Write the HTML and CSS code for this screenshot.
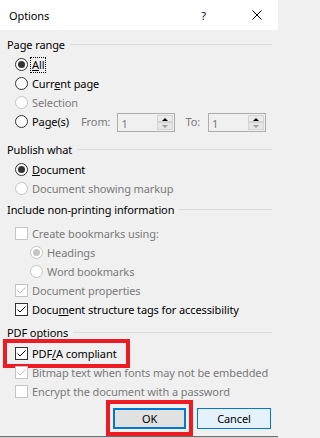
FILE: index.html
```html
<!DOCTYPE html>
<html>
<head>
<meta charset="utf-8">
<link rel="stylesheet" href="styles.css">
</head>
<body>
<div class="dialog">
  <div class="titlebar">
    <span class="title">Options</span>
    <span class="help">?</span>
    <svg class="close" width="10" height="10" viewBox="0 0 10 10"><path d="M0.5 0.5 L9.5 9.5 M9.5 0.5 L0.5 9.5" stroke="#000" stroke-width="1" fill="none"/></svg>
  </div>

  <div class="legend g1"><span>Page range</span><i class="sep"></i></div>
  <div class="row first1"><span class="radio on"></span><span class="focus"><u>A</u>ll</span></div>
  <div class="row"><span class="radio"></span><span>Curr<u>e</u>nt page</span></div>
  <div class="row dis"><span class="radio"></span><span>Selection</span></div>
  <div class="row"><span class="radio"></span><span class="pages">Pa<u>g</u>e(s)</span>
    <span class="lbl from">From:</span>
    <span class="spin"><span class="val">1</span><span class="arrows"><span class="up"></span><span class="down"></span></span></span>
    <span class="lbl to">To:</span>
    <span class="spin"><span class="val">1</span><span class="arrows"><span class="up"></span><span class="down"></span></span></span>
  </div>

  <div class="legend g2"><span>Publish what</span><i class="sep"></i></div>
  <div class="row first2"><span class="radio on"></span><span><u>D</u>ocument</span></div>
  <div class="row dis"><span class="radio"></span><span>Document showing markup</span></div>

  <div class="legend g3"><span>Include non-printing information</span><i class="sep"></i></div>
  <div class="row first3 dis"><span class="check"></span><span>Create bookmarks using:</span></div>
  <div class="row dis indent"><span class="radio on"></span><span>Headings</span></div>
  <div class="row dis indent"><span class="radio"></span><span>Word bookmarks</span></div>
  <div class="row dis"><span class="check on"><svg viewBox="0 0 11 11" width="11" height="11"><path d="M1.5 5.5 L4 8 L9.5 2.5" stroke="#bcbcbc" stroke-width="1" fill="none"/></svg></span><span>Document properties</span></div>
  <div class="row"><span class="check on"><svg viewBox="0 0 11 11" width="11" height="11"><path d="M1.5 5.5 L4 8 L9.5 2.5" stroke="#000" stroke-width="1" fill="none"/></svg></span><span>Docu<u>m</u>ent structure tags for accessibility</span></div>

  <div class="legend g4"><span>PDF options</span><i class="sep"></i></div>
  <div class="row first4">
    <span class="hl">
      <span class="check on"><svg viewBox="0 0 11 11" width="11" height="11"><path d="M1.5 5.5 L4 8 L9.5 2.5" stroke="#000" stroke-width="1" fill="none"/></svg></span><span>PDF<u>/</u>A compliant</span>
    </span>
  </div>
  <div class="row dis"><span class="check on"><svg viewBox="0 0 11 11" width="11" height="11"><path d="M1.5 5.5 L4 8 L9.5 2.5" stroke="#bcbcbc" stroke-width="1" fill="none"/></svg></span><span>Bitmap text when fonts may not be embedded</span></div>
  <div class="row dis"><span class="check"></span><span>Encrypt the document with a password</span></div>

  <div class="buttons">
    <span class="okwrap"><span class="btn ok">OK</span></span>
    <span class="btn cancel">Cancel</span>
  </div>
</div>
<div class="below"></div>
</body>
</html>
```

FILE: styles.css
```css
html, body {
  margin: 0;
  padding: 0;
}
body {
  width: 278px;
  height: 438px;
  overflow: hidden;
  background: #f0f0f0;
  font-family: "Noto Sans", "Open Sans", sans-serif;
  font-size: 11px;
  letter-spacing: -0.1px;
  color: #000;
}
.dialog {
  height: 437px;
  border-bottom: 1px solid #6e6e6e;
  box-sizing: border-box;
  overflow: hidden;
}
.titlebar {
  height: 30px;
  background: #fff;
  display: flex;
  align-items: center;
  padding-left: 9px;
}
.title {
  flex: 1;
}
.help {
  margin-right: 46px;
}
.close {
  margin-right: 16px;
}
.legend {
  height: 16px;
  display: flex;
  align-items: center;
  padding-left: 7px;
  padding-right: 6px;
}
.legend .sep {
  flex: 1;
  height: 1px;
  background: #dcdcdc;
  margin-left: 5px;
}
.g1 { margin-top: 6px; }
.g2 { margin-top: 10px; }
.g3 { margin-top: 3px; }
.g4 { margin-top: 5px; }
.first1 { margin-top: 3px; }
.first2 { margin-top: 3px; }
.first3 { margin-top: 7px; }
.first4 { margin-top: 4px; }
.row {
  height: 19px;
  display: flex;
  align-items: center;
  padding-left: 15px;
  white-space: nowrap;
}
.row.indent {
  padding-left: 30px;
}
.row.dis {
  color: #7a7a7a;
}
.radio {
  width: 13px;
  height: 13px;
  box-sizing: border-box;
  border: 1px solid #333;
  border-radius: 50%;
  background: #fff;
  margin-right: 4px;
  display: flex;
  align-items: center;
  justify-content: center;
  flex: none;
}
.radio.on::after {
  content: "";
  width: 7px;
  height: 7px;
  border-radius: 50%;
  background: #333;
}
.dis .radio {
  border-color: #c4c4c4;
}
.dis .radio.on::after {
  background: #c4c4c4;
}
.check {
  width: 13px;
  height: 13px;
  box-sizing: border-box;
  border: 1px solid #333;
  background: #fff;
  margin-right: 4px;
  display: flex;
  align-items: center;
  justify-content: center;
  flex: none;
}
.dis .check {
  border-color: #c4c4c4;
}
.focus {
  outline: 1px dotted #000;
  outline-offset: 0;
  padding: 0 1px;
  margin-left: -1px;
  line-height: 14px;
}
.lbl {
  color: #7a7a7a;
}
.from { margin-left: 12px; margin-right: 7px; }
.to { margin-left: 10px; margin-right: 8px; }
.spin {
  width: 58px;
  height: 19px;
  box-sizing: border-box;
  border: 1px solid #adadad;
  background: #f0f0f0;
  display: flex;
  margin-top: 1px;
}
.spin .val {
  flex: 1;
  color: #7a7a7a;
  padding-left: 3px;
  line-height: 20px;
}
.arrows {
  width: 16px;
  display: flex;
  flex-direction: column;
  margin: 1px 1px 1px 0;
}
.arrows .up, .arrows .down {
  flex: 1;
  background: #e6e6e6;
  border: 1px solid #d4d4d4;
  position: relative;
}
.arrows .up {
  background: #ececec;
}
.arrows .up::after, .arrows .down::after {
  content: "";
  position: absolute;
  left: 4px;
  width: 0;
  height: 0;
  border-left: 3px solid transparent;
  border-right: 3px solid transparent;
}
.arrows .up::after {
  top: 2px;
  border-bottom: 3px solid #000;
}
.arrows .down::after {
  top: 2px;
  border-top: 3px solid #9a9a9a;
}
.hl {
  display: flex;
  align-items: center;
  margin-left: -12px;
  padding: 0 9px 0 8px;
  height: 21px;
  border: 4px solid #ed1c24;
}
.buttons {
  display: flex;
  margin-top: -1px;
  padding-left: 106px;
  align-items: flex-start;
}
.okwrap {
  border: 4px solid #ed1c24;
  padding: 4px 3px 3px 3px;
  flex: none;
}
.btn {
  display: flex;
  align-items: center;
  justify-content: center;
  box-sizing: border-box;
  height: 21px;
}
.ok {
  width: 73px;
  background: #e1e1e1;
  border: 2px solid #0078d7;
}
.cancel {
  width: 74px;
  margin-left: 4px;
  margin-top: 8px;
  background: #e5f1fb;
  border: 1px solid #0078d7;
}
.below {
  height: 1px;
  background: #d0d0d0;
}
```
